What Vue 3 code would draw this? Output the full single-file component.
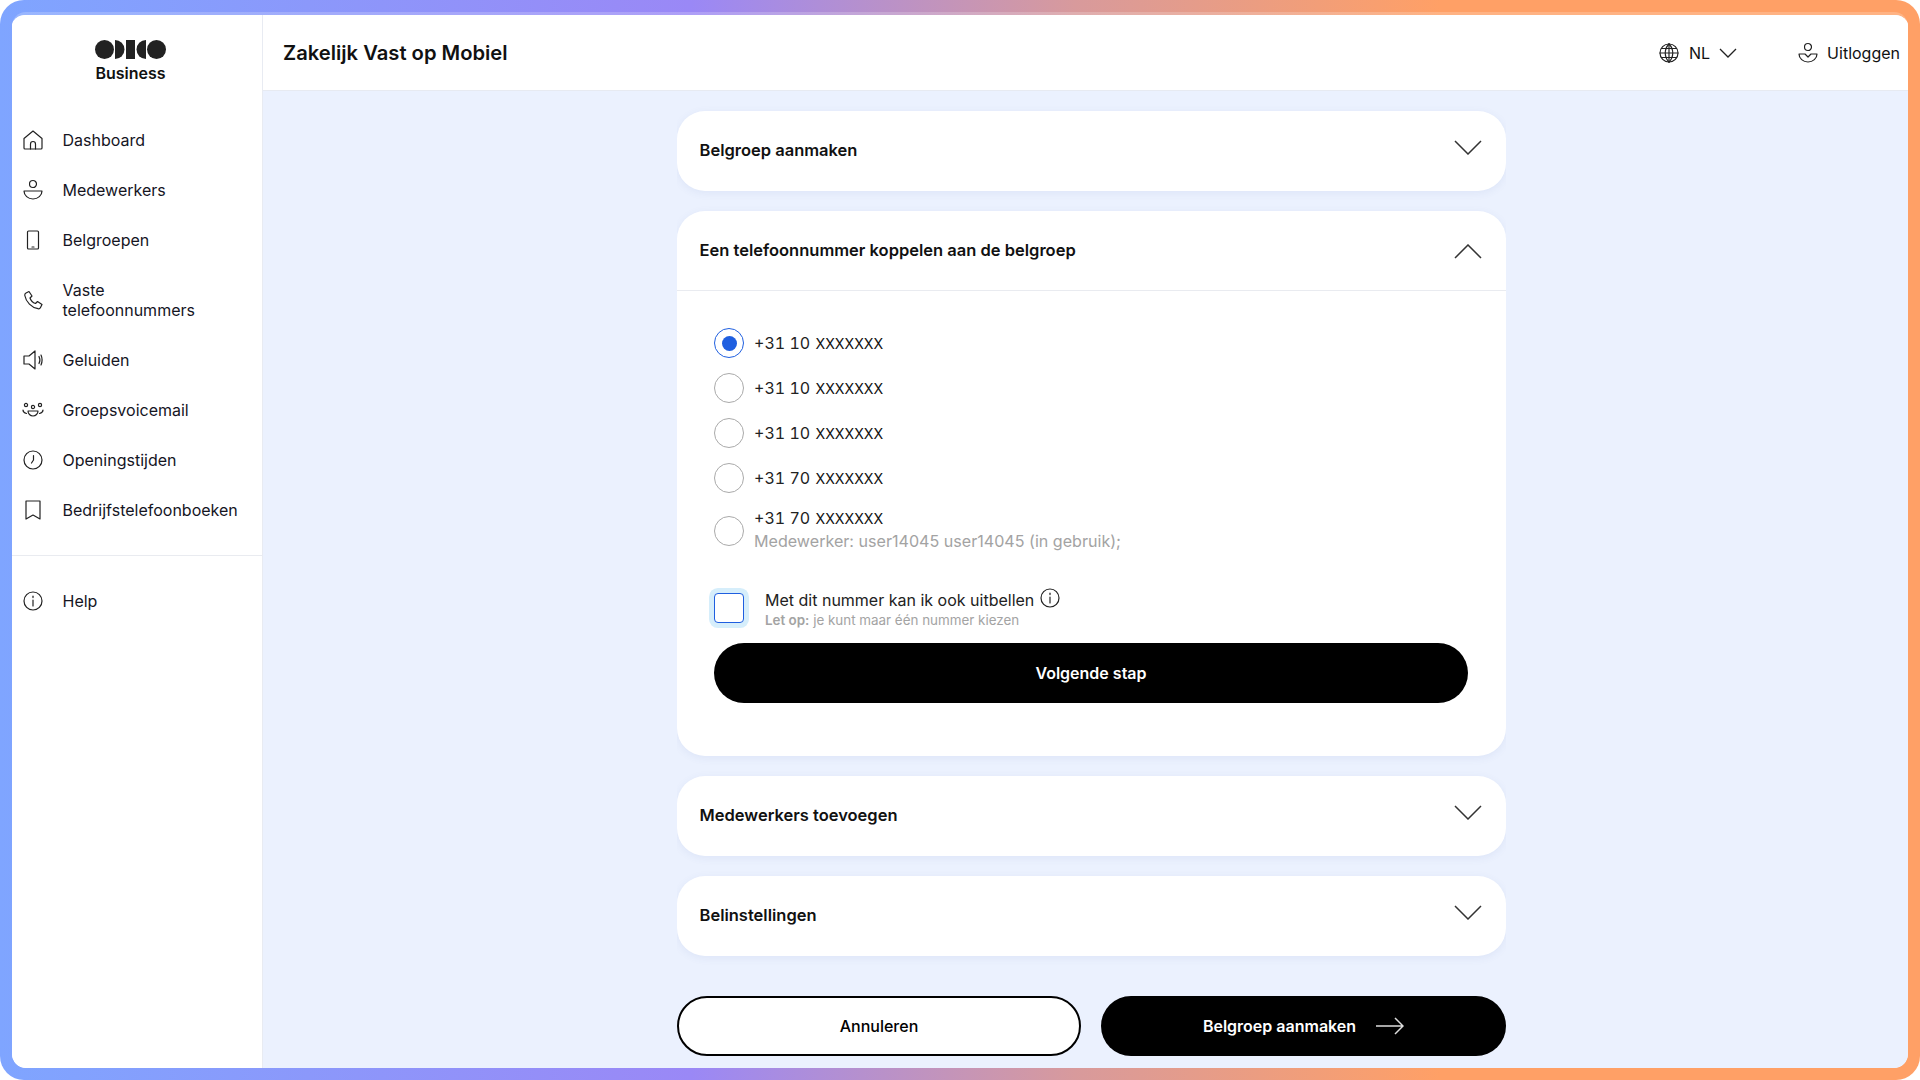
<template>
  <div class="frame">
    <div class="shell">
      <aside class="sidebar">
        <div class="brand">
          <svg class="logo" width="71" height="19" viewBox="0 0 71 19">
            <circle cx="9.5" cy="9.5" r="9.5" />
            <path d="M20 0a9.5 9.5 0 0 1 0 19z" />
            <rect x="31" y="0" width="9" height="19" />
            <path d="M51 0a9.5 9.5 0 0 0 0 19z" />
            <circle cx="61.5" cy="9.5" r="9.5" />
          </svg>
          <div class="brand-name">Business</div>
        </div>
        <nav class="nav">
          <a v-for="item in navItems" :key="item.label" class="nav-item">
            <svg class="icon" viewBox="0 0 24 24"><path v-for="d in item.icon" :key="d" :d="d" /></svg>
            <span>{{ item.label }}</span>
          </a>
        </nav>
        <div class="nav-divider"></div>
        <a class="nav-item">
          <svg class="icon" viewBox="0 0 24 24"><path v-for="d in icons.info" :key="d" :d="d" /></svg>
          <span>Help</span>
        </a>
      </aside>

      <main class="main">
        <header class="topbar">
          <h1>Zakelijk Vast op Mobiel</h1>
          <div class="top-actions">
            <div class="lang">
              <svg class="icon" viewBox="0 0 24 24"><path v-for="d in icons.globe" :key="d" :d="d" /></svg>
              <span class="lang-code">NL</span>
              <svg class="chev-small" viewBox="0 0 18 10"><path d="M1 1l8 8 8-8" /></svg>
            </div>
            <div class="logout">
              <svg class="icon" viewBox="0 0 24 24"><path v-for="d in icons.logout" :key="d" :d="d" /></svg>
              <span>Uitloggen</span>
            </div>
          </div>
        </header>

        <div class="content">
          <section class="card">
            <div class="card-head">
              <h2>Belgroep aanmaken</h2>
              <svg class="chev" viewBox="0 0 28 15"><path d="M1 1l13 13L27 1" /></svg>
            </div>
          </section>

          <section class="card">
            <div class="card-head open">
              <h2>Een telefoonnummer koppelen aan de belgroep</h2>
              <svg class="chev up" viewBox="0 0 28 15"><path d="M1 14L14 1l13 13" /></svg>
            </div>
            <div class="card-body">
              <div class="numbers">
                <label v-for="n in numbers" :key="n.id" class="number-row">
                  <span class="radio" :class="{ checked: selected === n.id }" @click="selected = n.id"></span>
                  <span class="number-text">
                    <span class="number">{{ n.prefix }} <b>XXXXXXX</b></span>
                    <span v-if="n.note" class="note">{{ n.note }}</span>
                  </span>
                </label>
              </div>

              <div class="outbound">
                <span class="checkbox"></span>
                <div class="outbound-text">
                  <div class="outbound-title">
                    Met dit nummer kan ik ook uitbellen
                    <svg class="info" viewBox="0 0 24 24"><path v-for="d in icons.info" :key="d" :d="d" /></svg>
                  </div>
                  <div class="outbound-hint"><strong>Let op:</strong> je kunt maar één nummer kiezen</div>
                </div>
              </div>

              <button type="button" class="btn btn-black btn-next">Volgende stap</button>
            </div>
          </section>

          <section class="card">
            <div class="card-head">
              <h2>Medewerkers toevoegen</h2>
              <svg class="chev" viewBox="0 0 28 15"><path d="M1 1l13 13L27 1" /></svg>
            </div>
          </section>

          <section class="card">
            <div class="card-head">
              <h2>Belinstellingen</h2>
              <svg class="chev" viewBox="0 0 28 15"><path d="M1 1l13 13L27 1" /></svg>
            </div>
          </section>

          <div class="actions">
            <button type="button" class="btn btn-white">Annuleren</button>
            <button type="button" class="btn btn-black">
              Belgroep aanmaken
              <svg class="arrow" viewBox="0 0 28 18"><path d="M0 9h27M19 1l8 8-8 8" /></svg>
            </button>
          </div>
        </div>
      </main>
    </div>
  </div>
</template>

<script setup>
import { ref } from 'vue'

const circle = (cx, cy, r) =>
  `M${cx - r} ${cy}a${r} ${r} 0 1 0 ${2 * r} 0a${r} ${r} 0 1 0 ${-2 * r} 0z`

const icons = {
  home: ['M3 20V10.5L12 3l9 7.5V20a1 1 0 0 1-1 1H4a1 1 0 0 1-1-1z', 'M9.5 21v-5a2.5 2.5 0 0 1 5 0v5'],
  user: [circle(12, 6, 3.5), 'M3 13h18a9 8 0 0 1-18 0z'],
  mobile: ['M7.5 3h9a1 1 0 0 1 1 1v16a1 1 0 0 1-1 1h-9a1 1 0 0 1-1-1V4a1 1 0 0 1 1-1z', 'M11 19h2'],
  phone: ['M5 5l3-1.5 3 4.5-2 2c.8 2.5 3 4.8 5.5 5.5l2-2 4.5 3-1.5 3c-.5 1-1.5 1.5-2.5 1.2C10.5 19.5 5 14 3.8 7.5c-.2-1 .2-2 1.2-2.5z'],
  sound: ['M3 8h5l6-5v18l-6-5H3z', 'M18 8.5c1.2 2.3 1.2 4.7 0 7', 'M20 7c1.4 3.2 1.4 6.8 0 10'],
  group: [circle(5, 7, 1.6), circle(12, 9, 1.6), circle(19, 7, 1.6), 'M7 13h10a5 5 0 0 1-10 0z', 'M2 12c0 1.5 1.5 3 3.5 3.5', 'M22 12c0 1.5-1.5 3-3.5 3.5'],
  clock: [circle(12, 12, 9), 'M12.5 7.5v4.5l-2 3'],
  bookmark: ['M5 3h14v18l-7-4-7 4z'],
  info: [circle(12, 12, 9), 'M12 11v6', 'M12 7.2v1.4'],
  globe: [circle(12, 12, 9), 'M12 3c-5 5-5 13 0 18', 'M12 3c5 5 5 13 0 18', 'M12 3v18', 'M3 12h18', 'M4.5 7.5h15', 'M4.5 16.5h15'],
  logout: [circle(12, 6, 3.5), 'M3 13h6l3 3 3-3h6a9 8 0 0 1-18 0z'],
}

const navItems = [
  { label: 'Dashboard', icon: icons.home },
  { label: 'Medewerkers', icon: icons.user },
  { label: 'Belgroepen', icon: icons.mobile },
  { label: 'Vaste telefoonnummers', icon: icons.phone },
  { label: 'Geluiden', icon: icons.sound },
  { label: 'Groepsvoicemail', icon: icons.group },
  { label: 'Openingstijden', icon: icons.clock },
  { label: 'Bedrijfstelefoonboeken', icon: icons.bookmark },
]

const numbers = [
  { id: 1, prefix: '+31 10' },
  { id: 2, prefix: '+31 10' },
  { id: 3, prefix: '+31 10' },
  { id: 4, prefix: '+31 70' },
  { id: 5, prefix: '+31 70', note: 'Medewerker: user14045 user14045 (in gebruik);' },
]

const selected = ref(1)
</script>

<style>
html,
body {
  margin: 0;
  background: #fff;
}
</style>

<style scoped>
.frame {
  width: 1920px;
  height: 1080px;
  box-sizing: border-box;
  padding: 12px;
  border-radius: 24px;
  background: linear-gradient(90deg, #7fa5ff 0%, #9a88f6 36%, #d89a9c 56%, #ffa066 75%, #ffa066 100%);
  font-family: Inter, "Liberation Sans", sans-serif;
  color: #111;
  overflow: hidden;
}

.shell {
  height: 100%;
  box-sizing: border-box;
  display: grid;
  grid-template-columns: 251px 1fr;
  border-radius: 14px;
  overflow: hidden;
  background: #fff;
  border-top: 3px solid rgba(255, 255, 255, 0.2);
  background-clip: padding-box;
}

.sidebar {
  background: #fff;
  border-right: 1px solid #e8ebf2;
  box-sizing: border-box;
}

.brand {
  height: 100px;
  box-sizing: border-box;
  padding: 25px 13px 0 0;
  display: flex;
  flex-direction: column;
  align-items: center;
}

.logo {
  fill: #222;
  display: block;
}

.brand-name {
  margin-top: 5px;
  font-size: 16px;
  line-height: 18px;
  font-weight: 600;
}

.nav-item {
  display: flex;
  align-items: center;
  min-height: 50px;
  padding-left: 9px;
  font-size: 16px;
  line-height: 20px;
  color: #15151f;
}

.nav-item span {
  margin-left: 17.5px;
  width: 150px;
}

.nav .nav-item:nth-child(4) {
  min-height: 70px;
}

.nav-divider {
  height: 1px;
  background: #e9ebf0;
  margin: 20px 0;
}

.icon {
  width: 24px;
  height: 24px;
  flex: none;
  fill: none;
  stroke: #222;
  stroke-width: 1.2;
  stroke-linejoin: round;
  stroke-linecap: round;
}

.main {
  display: flex;
  flex-direction: column;
  min-width: 0;
  background: #ebf1fe;
}

.topbar {
  height: 76px;
  flex: none;
  box-sizing: border-box;
  background: #fff;
  border-bottom: 1px solid #e7eaf1;
  display: flex;
  align-items: center;
  justify-content: space-between;
  padding: 0 8px 0 20px;
}

.topbar h1 {
  margin: 0;
  font-size: 20.2px;
  font-weight: 600;
}

.top-actions {
  display: flex;
  align-items: center;
  gap: 59px;
  font-size: 16px;
}

.lang,
.logout {
  display: flex;
  align-items: center;
}

.lang-code {
  margin-left: 8px;
}

.chev-small {
  width: 18px;
  height: 10px;
  margin-left: 9px;
  fill: none;
  stroke: #222;
  stroke-width: 1.3;
}

.logout span {
  margin-left: 7px;
}

.content {
  flex: 1;
  overflow: hidden;
  width: 829px;
  margin-left: 414px;
  padding-top: 20px;
}

.card {
  background: #fff;
  border-radius: 28px;
  box-shadow: 0 2px 8px rgba(70, 90, 170, 0.08);
  margin-bottom: 20px;
}

.card-head {
  height: 80px;
  box-sizing: border-box;
  padding: 0 24px 0 22.5px;
  display: flex;
  align-items: center;
  justify-content: space-between;
}

.card-head.open {
  border-bottom: 1px solid #e9ebf0;
}

.card-head h2 {
  margin: -2px 0 0;
  font-size: 16.5px;
  font-weight: 600;
}

.chev {
  width: 28px;
  height: 15px;
  margin-top: -8px;
  fill: none;
  stroke: #333;
  stroke-width: 1.5;
}

.chev.up {
  margin-top: 2px;
}

.card-body {
  padding: 37px 38px 53px 37px;
}

.numbers {
  display: flex;
  flex-direction: column;
  gap: 15px;
}

.number-row {
  display: flex;
  align-items: center;
  gap: 10px;
  min-height: 30px;
}

.radio {
  width: 30px;
  height: 30px;
  box-sizing: border-box;
  border: 1px solid #aaa;
  border-radius: 50%;
  flex: none;
  display: flex;
  align-items: center;
  justify-content: center;
}

.radio.checked {
  border-color: #1f5fe0;
}

.radio.checked::after {
  content: "";
  width: 15px;
  height: 15px;
  border-radius: 50%;
  background: #1f5fe0;
}

.number-text {
  display: flex;
  flex-direction: column;
  gap: 1px;
}

.number {
  font-size: 16px;
  line-height: 20px;
  color: #222;
  font-variant-numeric: tabular-nums;
}

.number b {
  font-size: 14.2px;
  font-weight: 400;
  margin-left: 1px;
  color: #111;
}

.note {
  font-size: 16.1px;
  line-height: 23px;
  color: #a3a3a3;
}

.outbound {
  display: flex;
  align-items: flex-start;
  height: 30px;
  margin-top: 40px;
}

.checkbox {
  width: 30px;
  height: 30px;
  box-sizing: border-box;
  flex: none;
  border: 1px solid #1f5fe0;
  border-radius: 4px;
  background: #fff;
  box-shadow: 0 0 0 5px #d6eefb;
}

.outbound-text {
  margin-left: 21px;
}

.outbound-title {
  display: flex;
  align-items: center;
  gap: 4px;
  font-size: 16px;
  line-height: 20px;
  margin-top: -3px;
  color: #222;
}

.info {
  width: 24px;
  height: 24px;
  margin: -6px 0 -2px;
  fill: none;
  stroke: #222;
  stroke-width: 1.2;
  stroke-linecap: round;
}

.outbound-hint {
  font-size: 13.4px;
  line-height: 16px;
  margin-top: 2px;
  color: #a3a3a3;
}

.outbound-hint strong {
  font-weight: 600;
}

.btn {
  height: 60px;
  border-radius: 30px;
  font-family: inherit;
  font-size: 16px;
  font-weight: 600;
  display: flex;
  align-items: center;
  justify-content: center;
  box-sizing: border-box;
  cursor: pointer;
}

.btn-black {
  background: #000;
  color: #fff;
  border: none;
}

.btn-white {
  background: #fff;
  color: #000;
  border: 2px solid #000;
  font-weight: 500;
}

.btn-next {
  width: 100%;
  margin-top: 20px;
}

.actions {
  display: grid;
  grid-template-columns: 404px 405px;
  gap: 20px;
  margin-top: 40px;
}

.arrow {
  width: 28px;
  height: 18px;
  margin-left: 20px;
  fill: none;
  stroke: #ddd;
  stroke-width: 1.5;
}
</style>
